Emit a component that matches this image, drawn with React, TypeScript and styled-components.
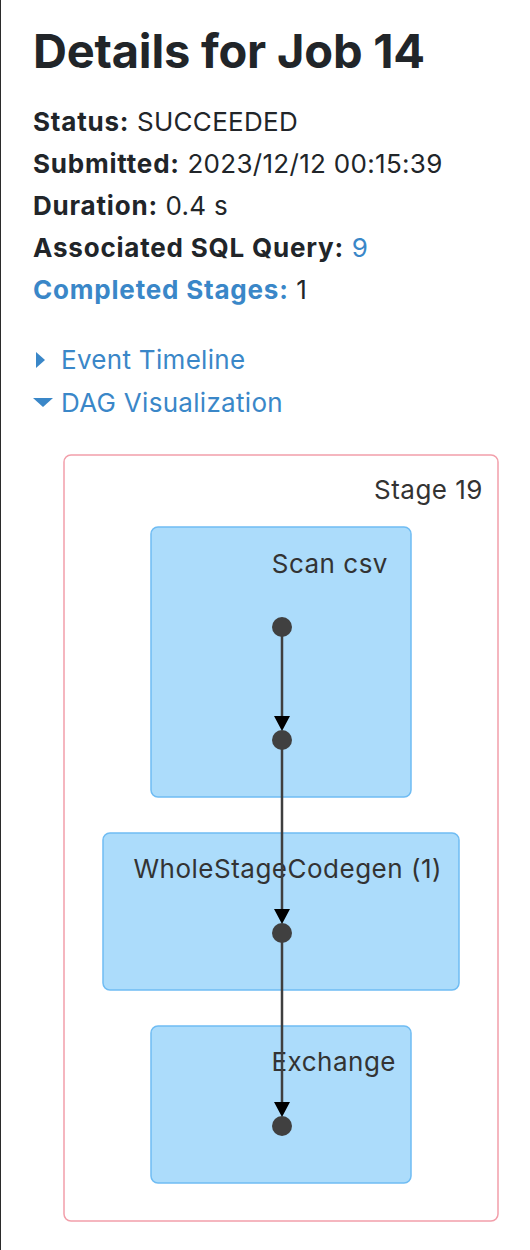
import React from "react";
import styled, { createGlobalStyle } from "styled-components";

const Global = createGlobalStyle`
  html, body { margin: 0; padding: 0; background: #fff; }
  body { font-family: Inter, "Noto Sans", "Liberation Sans", sans-serif; color: #212529; }
`;

const Page = styled.div`
  min-height: 1250px;
  border-left: 1px solid #2b2b2b;
  box-sizing: border-box;
  padding: 22px 0 0 32px;
`;

const Title = styled.h1`
  margin: 0 0 21px 0;
  font-size: 47px;
  line-height: 58px;
  font-weight: 700;
  letter-spacing: -0.2px;
  color: #212529;
`;

const InfoList = styled.ul`
  list-style: none;
  margin: 0;
  padding: 0;
`;

const InfoItem = styled.li`
  font-size: 26px;
  line-height: 42px;
  letter-spacing: 0.3px;
  color: #212529;
`;

const Label = styled.strong<{ $link?: boolean }>`
  font-weight: 700;
  letter-spacing: 0.8px;
  color: ${(p) => (p.$link ? "#3a87c8" : "#212529")};
`;

const Link = styled.a`
  color: #3a87c8;
  text-decoration: none;
`;

const Toggles = styled.div`
  margin-top: 27px;
  display: flex;
  flex-direction: column;
`;

const Toggle = styled.a`
  display: flex;
  align-items: center;
  gap: 8px;
  font-size: 26px;
  line-height: 43px;
  letter-spacing: 0.3px;
  color: #3a87c8;
  text-decoration: none;
`;

const Caret = styled.span<{ $open?: boolean }>`
  display: inline-block;
  width: 0;
  height: 0;
  ${(p) =>
    p.$open
      ? `border-left: 10px solid transparent; border-right: 10px solid transparent; border-top: 9px solid #3a87c8; margin-left: 0;`
      : `border-top: 8px solid transparent; border-bottom: 8px solid transparent; border-left: 9px solid #3a87c8; margin-left: 3px; margin-right: 8px;`}
`;

const DagWrap = styled.div`
  margin: 30px 0 0 30px;
`;

const nodeY = [173, 286, 479, 672];
const cx = 219;

const labelProps = {
  textAnchor: "end" as const,
  fontSize: 26,
  letterSpacing: 0.5,
  fill: "#333",
  fontFamily: "Inter, sans-serif",
};

function Arrow({ y1, y2 }: { y1: number; y2: number }) {
  const tip = y2 - 9;
  return (
    <g>
      <line x1={cx} y1={y1} x2={cx} y2={tip - 4} stroke="#3f3f3f" strokeWidth={2.5} />
      <path d={`M${cx - 8},${tip - 15} L${cx + 8},${tip - 15} L${cx},${tip} Z`} fill="#000" />
    </g>
  );
}

function Dag() {
  return (
    <svg width={438} height={770} viewBox="0 0 438 770">
      <rect x={1} y={1} width={434} height={766} rx={7} fill="#fff" stroke="#f29faa" strokeWidth={1.5} />
      <text x={420} y={45} {...labelProps}>
        Stage 19
      </text>

      <rect x={88} y={73} width={260} height={270} rx={7} fill="#acdcfb" stroke="#6fbcf3" strokeWidth={1.5} />
      <text x={325} y={119} {...labelProps}>
        Scan csv
      </text>

      <rect x={40} y={379} width={356} height={157} rx={7} fill="#acdcfb" stroke="#6fbcf3" strokeWidth={1.5} />
      <text x={379} y={424} {...labelProps}>
        WholeStageCodegen (1)
      </text>

      <rect x={88} y={572} width={260} height={157} rx={7} fill="#acdcfb" stroke="#6fbcf3" strokeWidth={1.5} />
      <text x={333} y={617} {...labelProps}>
        Exchange
      </text>

      {nodeY.slice(1).map((y, i) => (
        <Arrow key={y} y1={nodeY[i]} y2={y} />
      ))}
      {nodeY.map((y) => (
        <circle key={y} cx={cx} cy={y} r={10} fill="#404040" />
      ))}
    </svg>
  );
}

export default function App() {
  return (
    <>
      <Global />
      <Page>
        <Title>Details for Job 14</Title>
        <InfoList>
          <InfoItem>
            <Label>Status:</Label> SUCCEEDED
          </InfoItem>
          <InfoItem>
            <Label>Submitted:</Label> 2023/12/12 00:15:39
          </InfoItem>
          <InfoItem>
            <Label>Duration:</Label> 0.4 s
          </InfoItem>
          <InfoItem>
            <Label>Associated SQL Query:</Label> <Link href="#">9</Link>
          </InfoItem>
          <InfoItem>
            <Label $link>Completed Stages:</Label> 1
          </InfoItem>
        </InfoList>
        <Toggles>
          <Toggle href="#">
            <Caret />
            Event Timeline
          </Toggle>
          <Toggle href="#">
            <Caret $open />
            DAG Visualization
          </Toggle>
        </Toggles>
        <DagWrap>
          <Dag />
        </DagWrap>
      </Page>
    </>
  );
}
